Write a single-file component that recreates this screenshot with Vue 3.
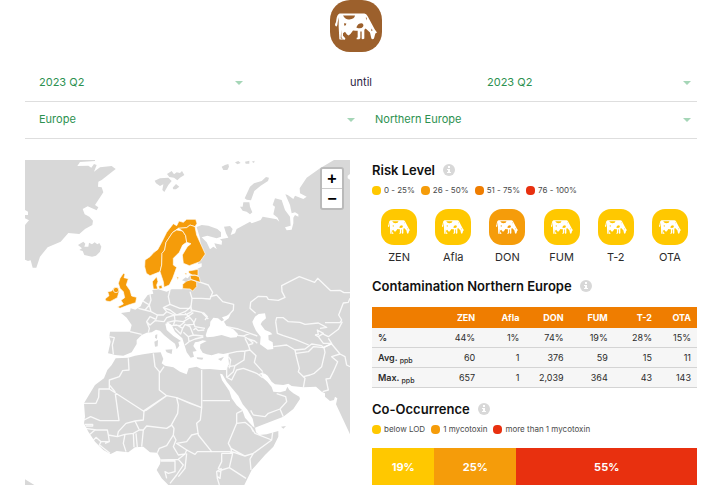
<script setup>
import { ref } from 'vue'

const periods = ['2023 Q2', '2023 Q1', '2022 Q4']
const from = ref('2023 Q2')
const to = ref('2023 Q2')
const region = ref('Europe')
const subregion = ref('Northern Europe')

const riskLegend = [
  { label: '0 - 25%', tone: 'yellow' },
  { label: '26 - 50%', tone: 'amber' },
  { label: '51 - 75%', tone: 'orange' },
  { label: '76 - 100%', tone: 'red' }
]
const coLegend = [
  { label: 'below LOD', tone: 'yellow' },
  { label: '1 mycotoxin', tone: 'amber' },
  { label: 'more than 1 mycotoxin', tone: 'red' }
]
const toxins = [
  { name: 'ZEN', tone: 'yellow' },
  { name: 'Afla', tone: 'yellow' },
  { name: 'DON', tone: 'amber' },
  { name: 'FUM', tone: 'yellow' },
  { name: 'T-2', tone: 'yellow' },
  { name: 'OTA', tone: 'yellow' }
]
const rows = [
  { label: '%', unit: '', values: ['44%', '1%', '74%', '19%', '28%', '15%'] },
  { label: 'Avg.', unit: 'ppb', values: ['60', '1', '376', '59', '15', '11'] },
  { label: 'Max.', unit: 'ppb', values: ['657', '1', '2,039', '364', '43', '143'] }
]
const shares = [
  { value: 19, tone: 'yellow' },
  { value: 25, tone: 'amber' },
  { value: 55, tone: 'red' }
]

const land = [
  // Greenland
  'M15 15H225V18L180 21L172 33L205 32L214 38L222 27L230 30L222 50L240 37L275 33L287 42L245 75L235 80L234 95L245 97L250 112L225 150L235 157L230 166L203 154L188 162L194 178L208 185L219 197L217 210L195 222L178 237L145 234L122 260L83 277L60 305L49 338H38L32 316L24 318L15 314V210L27 196L15 190V180H24V170L15 165Z',
  // Iceland
  'M174 270L190 260L196 266L193 275H205L207 263L216 268L224 262L232 268L238 264L244 275L240 290L228 302L216 305L193 300L188 288L178 285L186 280Z',
  // Svalbard and Franz Josef Land
  'M404 77L420 70L445 68L455 78L445 90L433 111L427 105L430 88L420 93L408 85ZM441 57L455 48L462 58L470 52L480 54L486 48L493 60L480 68L472 76L462 68L448 66ZM458 98L468 87L478 95L468 103L460 103Z',
  'M605 35L615 30L625 27L627 35L622 45L610 45ZM645 22L655 18L662 24L652 28ZM675 20L688 17V26H677ZM695 20L704 17L702 24Z',
  // Novaya Zemlya
  'M674 130L690 95L702 85L725 78L738 66L747 68L744 78L722 92L703 108L693 136L680 134ZM660 155H668L670 142L688 142L690 155L697 172L690 178L680 170L668 167Z',
  // Europe, Asia and Africa
  'M530 216L545 210L565 212L592 222L603 232L603 245L590 250L562 242L545 247L560 262L570 283L580 275L590 282L583 265L605 269L606 258L600 253L625 248L618 235L612 215L630 213L638 222L632 240L645 235L650 222L690 200L695 205L722 195L728 185L770 193L778 200L773 188L760 178L765 155L758 150L765 130L785 135L795 165L810 185L812 212L795 217L800 226L815 224L820 205L820 188L825 180L835 185V178L825 172L815 175L810 150L796 118L803 120L820 132L825 122L850 132L860 125L840 115L839 100L860 68L900 40L942 15H990V57L983 62V70L990 74V838L948 748L952 730L945 725L942 735L930 738L915 725V715L905 710L888 695L850 697L815 693L805 686L790 690L765 688L755 680L743 662L735 656L722 654L728 668L742 680L755 696L760 710L780 712L797 707L802 695L808 705L820 715L838 725L840 732L820 762L790 785L718 813L705 818L708 832L718 840L740 838L775 828V845L760 875L735 900L695 945L673 990H445L425 970L410 945L420 927L422 913L412 893L390 892L370 875L345 877L325 892L290 888L272 897L250 885L225 860L205 830L192 805L195 785L192 745L210 715L225 690L252 670L262 645L275 630L287 610L325 608L345 602L370 598L400 593L422 592L430 612L425 625L435 632L460 637L480 650L500 658L506 640L530 635L545 643L570 642L600 645L618 645L627 628L625 605L627 593L610 597L595 595L575 601L560 598L548 593L540 580L541 568L560 558L548 556L535 560L525 562L520 573L530 588L518 590L522 605L512 608L500 592L495 575L487 550L465 530L455 510L445 503L436 506L440 525L460 543L483 558L475 561L478 572L470 583L465 566L450 555L432 540L420 527L408 524L395 532L380 533L365 540L350 555L350 567L335 592L310 602L285 600L275 597L264 595L272 560L268 545L270 530L300 530L330 530L335 510L320 488L303 474L330 470L332 460L346 464L362 454L368 440L383 420L400 416L397 405L415 403L440 410L455 403L487 403L495 380L530 335L545 300L540 250Z',
  // Sardinia, Corsica, Sicily, Socotra and the South American corner
  'M403 560L414 555L413 574L405 575ZM406 540L412 538L411 552L405 548ZM436 584L457 583L455 597L440 592ZM783 815L798 813L790 821ZM15 973L43 990H15Z'
]

const water = [
  // Black Sea
  'M557 541L563 522L570 512L571 500L580 488L594 490L605 499L612 495L606 487L618 483L632 477L626 490L612 500L620 514L640 523L654 537L650 547L632 548L605 540L580 545L560 547Z',
  // Caspian Sea
  'M697 500L705 485L716 477L735 475L738 490L726 500L722 508L735 525L750 531L757 538L745 541L746 555L758 562L760 582L743 584L720 568L722 545L708 527L700 510Z',
  // Red Sea
  'M600 656L607 658L620 680L655 722L668 748L682 764L698 791L704 818L698 814L675 788L667 766L650 751L635 730L628 708L606 676Z',
  // Baltic, Gulf of Finland
  'M487 402L498 380L493 350L520 330L545 325L545 335L525 345L505 348L497 368L497 402Z'
]

const islands = [
  'M530 607L550 608L547 614L532 612Z',
  'M594 612L612 605L603 618Z'
]

const borders = [
  // Eastern Europe
  'M510 410L516 430L513 455L515 470M535 380L565 390L578 412L570 432L545 430L516 430M570 425L590 420L608 440L641 448L640 465L622 485M513 455L513 465L545 472L565 492M450 405L445 425L450 448L480 460L508 460L513 452M495 490L520 473M555 495L562 485L550 472',
  'M390 418L393 435L388 450L393 470L412 480L430 480L440 470L430 458L450 448M430 458L450 465L470 480L495 470L508 460M440 470L463 480M412 480L408 493L390 485L380 500L390 510L405 497L432 500L440 488L463 480L465 497L440 503M367 437L380 445L390 450M355 460L375 465L388 450M375 465L393 470M465 480L500 478L515 470M465 497L490 500L510 488L495 475M465 497L460 510L480 512L495 500M455 512L470 510L488 520L482 537L465 520M488 520L495 508L510 515L520 540L505 545L490 532M510 488L520 500L525 515L555 520M520 525L527 520L535 527L553 525M520 540L550 543M505 545L507 560L495 570M507 560L525 552L550 546M380 500L388 520L385 533M330 530L365 538M268 545L283 548L277 570L280 598M500 510L520 508L528 490',
  // Central Asia and Caucasus
  'M990 413H972L960 406L932 407L893 370L884 382L838 365L785 392L786 410L795 427L775 436L745 433L740 425L715 424L692 442L690 460L707 475M990 430L985 442L970 444L956 480L965 495L960 503L915 503M767 500L770 488L790 488L805 500L840 502L855 508L895 504L920 517L900 520M767 500L772 535L790 542L825 553L866 570M760 575L800 570L825 585M772 535L767 500M825 585L855 582L875 567L905 572L910 578L935 565M885 540L895 538L892 525L910 535L895 545L885 540M905 535L925 545L955 523L967 500M895 545L910 565L935 565L925 550',
  'M616 514L655 522L690 535L712 543M651 541L670 543L685 552L700 565M670 543L690 535M685 552L704 558L712 565M675 550L685 570L700 565',
  // Middle East
  'M627 595L650 590L675 588L690 585M675 588L672 615L645 632L625 635M690 585L708 602L703 622L728 650M690 585L685 570M645 632L640 650L620 668M622 668L635 675L650 645L670 640L710 655L728 668M620 635V668M715 660L730 653M625 605L632 615L628 640M825 585L828 600L838 640L835 650L855 670L850 698M828 595L865 590L880 575L912 578L915 592L905 635L883 655L870 660L850 665M910 578L935 567L960 597L975 605L980 630L990 635M960 597L935 605L953 620L940 650L930 670L918 672L925 705L908 710M700 780L735 785L745 775L780 762L800 740L797 725L770 716M780 762L790 785M700 780L692 766M762 690L764 708',
  // North Africa
  'M325 610L327 645L308 647L298 665L268 675V702L370 768L440 722L418 705V650L405 635L400 595M418 655L432 635M268 688V702H237L236 727L228 745H192M285 710L297 797H240L212 785L192 795M285 710L268 690M370 768L380 765L440 722L470 728L545 758V645M470 728L510 745L545 758M548 737H630M545 758L541 795L530 805L535 840L575 890H630',
  'M470 728L475 750L473 775L453 812L440 820L380 813L370 825L365 875M372 768L370 795L345 798L318 805L295 830L292 845L265 840L262 825L230 825L197 820M345 798L358 825L370 825M292 845L315 838L340 835L358 825M315 838L310 865L318 890M340 835L342 877M348 835L352 877M265 840L268 860L243 860L228 847L218 858M243 860L238 870L245 875L270 895M268 860L255 865M210 838L225 825M195 808H218V813H197M440 820L455 810L462 820L460 840L440 872L418 880L412 893M460 840L468 855L460 875L475 900L495 897L500 885L470 865L500 860L515 840L535 835',
  // Central and East Africa
  'M500 885L525 898L532 890L575 890M422 915L475 913L495 897M422 918H465V950L445 955L435 950L440 970M475 913L490 930L470 960L450 985M500 895L495 940L475 965M605 895H635L633 880L625 865L650 805V775M630 890L638 895L628 938L605 945L595 940L605 920L605 895M628 938L678 970M605 940L590 950L592 970L598 990M595 950H603M633 880L660 895L675 903L700 895L755 855L758 832M700 895L690 912L693 945M650 805L675 802L692 815L705 835L755 855M650 775L668 766M692 815L700 830M635 890L675 903M603 945L600 970L592 965'
]

const highlighted = [
  // Norway
  'M375 315L390 305L402 292L413 284L425 262L440 232L460 206L470 212L477 198L490 202L500 193L527 193L531 205L525 215L510 210L500 218L475 220L458 232L438 262L434 285L426 295L425 330L420 350L408 355L390 362L379 355L374 335Z',
  // Sweden
  'M426 295L434 285L438 262L458 232L470 225L488 228L497 242L500 262L488 270L478 292L460 310L460 330L470 337L458 370L448 390L432 397L430 380L420 350L425 330Z',
  // Finland
  'M475 220L500 218L510 210L525 215L530 240L556 297L540 320L508 332L490 325L487 300L502 275L513 266L500 262L497 242L488 228Z',
  // Denmark
  'M397 380L410 365L414 380L410 390L413 402L400 402ZM416 393L425 390L427 400L418 402Z',
  // Baltic states
  'M505 348L534 343V362L518 360L507 355ZM510 362L525 360L538 366L541 382L528 378L513 374ZM488 388L500 378L515 374L530 380L530 395L518 408L510 402L488 401ZM470 365L476 367L473 374ZM494 355L501 354L498 360Z',
  // United Kingdom and Ireland
  'M300 370L310 355L315 358L312 368L325 371L319 390L330 406L335 423L350 427L347 443L325 450L300 460L292 456L310 447L303 436L314 428L310 410L300 400L295 385Z',
  'M255 432L267 422L263 410L275 408L282 398L294 399L298 407L292 428L270 440L258 438Z'
]
</script>

<template>
  <svg class="defs" aria-hidden="true">
    <symbol id="cow" viewBox="0 0 126 80">
      <path fill="currentColor" d="M14 1H88Q94 1 98 9L119 48L126 58L121 61L117 76Q113 80 109 76L105 58L92 46L88 50V76Q84 80 80 77V55H76V75Q72 80 65 78V74L68 73V53H62L54 52L47 62L41 67L36 64L30 56L24 60V68L31 75L30 80L24 79L19 72V50L17 75L24 78Q20 80 13 78L11 40V12L8 28Q8 34 5 40Q0 40 0 33Q4 28 4 20Q6 3 14 1Z" />
      <path fill="var(--spot)" d="M24 7H60Q59 18 43 19Q31 20 24 7ZM64 43Q68 30 80 30Q88 33 84 41Q77 49 64 43ZM27 30L34 31Q34 38 28 38ZM92 14L96 22L95 13ZM109 46L113 51L109 54Z" />
    </symbol>
    <symbol id="info" viewBox="0 0 12 12">
      <circle cx="6" cy="6" r="6" fill="#d8d8d8" />
      <path fill="#fff" d="M5 2H7V4H5ZM4 5H7V8H8V9H4V8H5V6H4Z" />
    </symbol>
  </svg>

  <main class="page">
    <header class="brand">
      <span class="tile tile-large brown">
        <svg class="cow" role="img" aria-label="Ruminants"><use href="#cow" /></svg>
      </span>
    </header>

    <form class="filters" @submit.prevent>
      <div class="filter-row thirds">
        <span class="picker">
          <select v-model="from" aria-label="From quarter">
            <option v-for="p in periods" :key="p">{{ p }}</option>
          </select>
        </span>
        <span class="until">until</span>
        <span class="picker">
          <select v-model="to" aria-label="To quarter">
            <option v-for="p in periods" :key="p">{{ p }}</option>
          </select>
        </span>
      </div>
      <div class="filter-row halves">
        <span class="picker">
          <select v-model="region" aria-label="Region">
            <option>Europe</option>
          </select>
        </span>
        <span class="picker">
          <select v-model="subregion" aria-label="Subregion">
            <option>Northern Europe</option>
          </select>
        </span>
      </div>
    </form>

    <div class="columns">
      <section class="map">
        <svg class="map-canvas" viewBox="15 15 975 975" role="img" aria-label="Map of Europe">
          <path v-for="d in land" :key="d" class="land" :d="d" />
          <path v-for="d in borders" :key="d" class="border" :d="d" />
          <path v-for="d in water" :key="d" class="water" :d="d" />
          <path v-for="d in islands" :key="d" class="land" :d="d" />
          <path v-for="d in highlighted" :key="d" class="active" :d="d" />
          <circle class="ulster" cx="288" cy="405" r="8" />
          <path class="land" d="M486 376L497 367L506 372L498 380Z" />
        </svg>
        <div class="zoom">
          <button type="button" aria-label="Zoom in">+</button>
          <button type="button" aria-label="Zoom out">−</button>
        </div>
      </section>

      <div class="panel">
        <section>
          <h2>Risk Level <svg class="info"><use href="#info" /></svg></h2>
          <ul class="legend">
            <li v-for="l in riskLegend" :key="l.label"><i class="dot" :class="l.tone"></i>{{ l.label }}</li>
          </ul>
          <ul class="toxins">
            <li v-for="t in toxins" :key="t.name">
              <span class="tile" :class="t.tone"><svg class="cow"><use href="#cow" /></svg></span>
              {{ t.name }}
            </li>
          </ul>
        </section>

        <section class="contamination">
          <h2>Contamination Northern Europe <svg class="info"><use href="#info" /></svg></h2>
          <table>
            <colgroup>
              <col class="col-label" />
              <col v-for="t in toxins" :key="t.name" :class="{ 'col-last': t.name === 'OTA' }" />
            </colgroup>
            <thead>
              <tr>
                <td></td>
                <th v-for="t in toxins" :key="t.name" scope="col">{{ t.name }}</th>
              </tr>
            </thead>
            <tbody>
              <tr v-for="r in rows" :key="r.label">
                <th scope="row">{{ r.label }} <small v-if="r.unit">{{ r.unit }}</small></th>
                <td v-for="(v, i) in r.values" :key="i">{{ v }}</td>
              </tr>
            </tbody>
          </table>
        </section>

        <section class="occurrence">
          <h2>Co-Occurrence <svg class="info"><use href="#info" /></svg></h2>
          <ul class="legend">
            <li v-for="l in coLegend" :key="l.label"><i class="dot" :class="l.tone"></i>{{ l.label }}</li>
          </ul>
          <div class="bar">
            <span v-for="s in shares" :key="s.tone" :class="s.tone" :style="{ flexGrow: s.value }">{{ s.value }}%</span>
          </div>
        </section>
      </div>
    </div>
  </main>
</template>

<style>
body {
  background: #fff;
}
</style>

<style scoped>
.page {
  padding: 0 26px 14px 25px;
  font-family: Inter, "Open Sans", sans-serif;
  font-size: 11px;
  line-height: 16px;
  color: #2b2b2b;
}
.defs {
  position: absolute;
  width: 0;
  height: 0;
}
.brand {
  display: flex;
  justify-content: center;
  padding-right: 10px;
  margin-bottom: 13px;
}
.tile {
  display: flex;
  align-items: center;
  justify-content: center;
  width: 36px;
  height: 36px;
  border-radius: 13px;
  color: #fff;
}
.tile .cow {
  width: 22px;
  height: 14px;
}
.tile-large {
  width: 52px;
  height: 52px;
  border-radius: 20px;
}
.tile-large .cow {
  width: 42px;
  height: 27px;
}
.brown { --spot: #9c602c; background: #9c602c; }
.yellow { --spot: #ffc800; background: #ffc800; }
.amber { --spot: #f59c0a; background: #f59c0a; }
.orange { --spot: #ef7d00; background: #ef7d00; }
.red { --spot: #e8300f; background: #e8300f; }

.filter-row {
  display: grid;
  align-items: center;
  height: 34px;
  padding-bottom: 2px;
  border-bottom: 1px solid #dedede;
}
.thirds { grid-template-columns: repeat(3, 1fr); }
.halves { grid-template-columns: repeat(2, 1fr); }
.picker {
  position: relative;
}
.picker::after {
  content: "";
  position: absolute;
  right: 6px;
  top: 50%;
  border: 4px solid transparent;
  border-top-color: #a5d6b7;
  border-bottom: 0;
  margin-top: -1px;
  pointer-events: none;
}
select {
  appearance: none;
  display: block;
  width: 100%;
  height: 32px;
  padding: 0 20px 0 14px;
  border: 0;
  background: none;
  font: inherit;
  color: #2c9150;
}
.until {
  text-align: center;
  color: #2a2343;
}

.columns {
  display: grid;
  grid-template-columns: 1fr 1fr;
  gap: 22px;
  margin-top: 21px;
}
.map {
  position: relative;
}
.map-canvas {
  display: block;
  width: 100%;
}
.land { fill: #d8d8d8; }
.water { fill: #fff; }
.border {
  fill: none;
  stroke: #fff;
  stroke-opacity: 0.85;
  stroke-width: 4;
  stroke-linejoin: round;
}
.active {
  fill: #f59c0a;
  stroke: #fff;
  stroke-width: 2;
  stroke-linejoin: round;
}
.ulster {
  fill: #f59c0a;
  stroke: #fff;
  stroke-width: 2;
}
.zoom {
  position: absolute;
  top: 7px;
  right: 6px;
  display: flex;
  flex-direction: column;
  border: 2px solid #bababa;
  border-radius: 3px;
  overflow: hidden;
}
.zoom button {
  width: 20px;
  height: 19px;
  padding: 0;
  border: 0;
  background: #fff;
  font: bold 16px/19px "Liberation Sans", sans-serif;
  color: #000;
}
.zoom button + button {
  height: 20px;
  border-top: 1px solid #ccc;
}

h2 {
  display: flex;
  align-items: center;
  gap: 8px;
  margin: 0;
  font-size: 13px;
  line-height: 20px;
  font-weight: 600;
  color: #111;
}
.info {
  width: 12px;
  height: 12px;
}
ul {
  margin: 0;
  padding: 0;
  list-style: none;
}
.legend {
  display: flex;
  gap: 6px;
  margin-top: 2px;
  font-size: 8px;
  line-height: 16px;
  color: #4a4a4a;
}
.legend li {
  display: flex;
  align-items: center;
  gap: 3px;
}
.dot {
  width: 9px;
  height: 9px;
  border-radius: 4px;
}
.toxins {
  display: grid;
  grid-template-columns: repeat(6, 1fr);
  margin-top: 11px;
}
.toxins li {
  display: flex;
  flex-direction: column;
  align-items: center;
  gap: 4px;
}
.contamination {
  margin-top: 11px;
}
table {
  width: 100%;
  margin-top: 11px;
  border-collapse: collapse;
  table-layout: fixed;
  font-size: 9px;
  line-height: 19px;
}
.col-label { width: 20%; }
.col-last { width: 12%; }
th,
td {
  height: 19px;
  padding: 0 6px 0 0;
  text-align: right;
}
thead {
  background: #ef7d00;
  color: #fff;
}
thead tr {
  height: 21px;
}
tbody tr {
  background: #f6f6f6;
  border-bottom: 1px solid #d4d4d4;
}
tbody th {
  padding: 0 0 0 6px;
  text-align: left;
  font-weight: 600;
}
small {
  position: relative;
  top: 2px;
  font-size: 7px;
  line-height: 1;
  font-weight: 500;
}
.occurrence {
  margin-top: 11px;
}
.bar {
  display: flex;
  height: 37px;
  margin-top: 11px;
  font-weight: 700;
  color: #fff;
}
.bar span {
  display: flex;
  align-items: center;
  justify-content: center;
  flex-basis: 0;
}
</style>
